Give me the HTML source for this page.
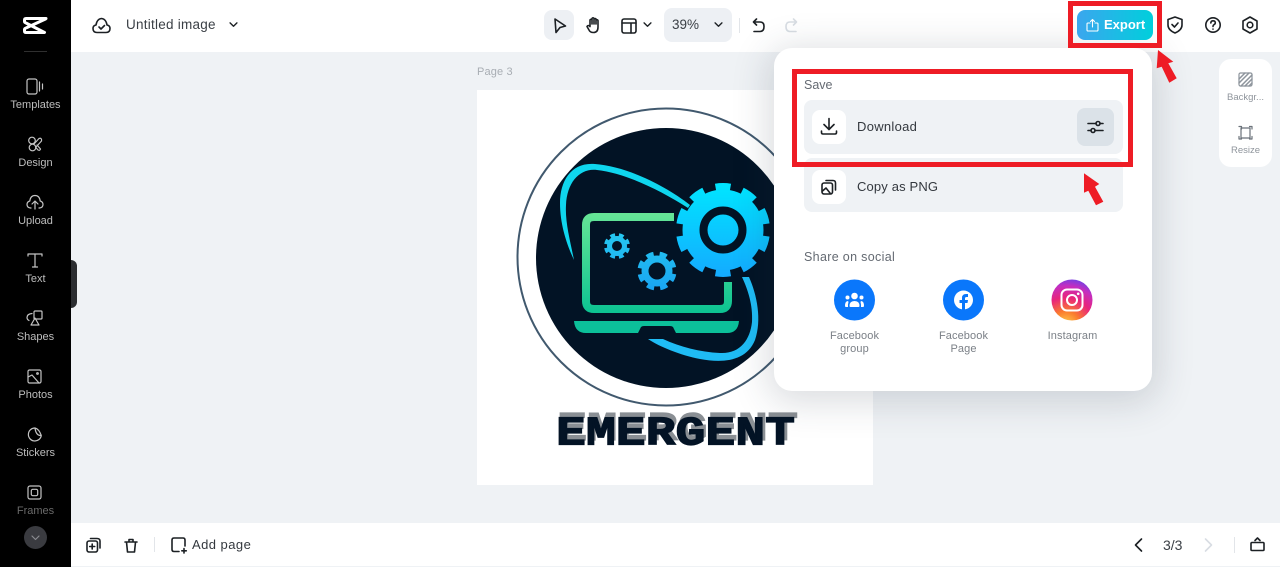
<!DOCTYPE html>
<html lang="en"><head><meta charset="utf-8"><title>Untitled image</title>
<style>
*{box-sizing:border-box}
html,body{margin:0;padding:0}
html{background:#eff2f5}
body{width:1280px;height:567px;position:relative;overflow:hidden;background:#eff2f5;font-family:"Liberation Sans",sans-serif;color:#2b3036;filter:blur(.3px)}
.t{position:absolute;white-space:nowrap;line-height:14px}
.a{position:absolute}
.nav{left:0;width:71px;text-align:center;color:#bdbdbd;font-size:11px}
.s{position:absolute;overflow:visible;fill:none;stroke:#1c2024;stroke-width:1.6;stroke-linecap:round;stroke-linejoin:round}
.n{stroke:#c4c4c4;stroke-width:1.2}
.lab{font-size:11px;color:#7b8087;text-align:center;line-height:13px;letter-spacing:.1px}
</style></head><body>

<!-- top and bottom bars -->
<div class="a" style="left:71px;top:0;width:1209px;height:52px;background:#fff"></div>
<div class="a" style="left:71px;top:523px;width:1209px;height:43px;background:#fff"></div>

<!-- page -->
<div class="t" style="left:477px;top:65px;font-size:11px;letter-spacing:.15px;color:#a8adb3">Page 3</div>
<svg class="a" style="left:477px;top:90px" width="396" height="395" viewBox="477 90 396 395">
<defs>
<linearGradient id="g1" gradientUnits="userSpaceOnUse" x1="0" y1="183" x2="0" y2="277"><stop offset="0" stop-color="#00e6ff"/><stop offset="1" stop-color="#14aaff"/></linearGradient>
<linearGradient id="g2" gradientUnits="userSpaceOnUse" x1="0" y1="213" x2="0" y2="313"><stop offset="0" stop-color="#66e596"/><stop offset="1" stop-color="#0cc392"/></linearGradient>
<linearGradient id="g3" gradientUnits="userSpaceOnUse" x1="0" y1="232" x2="0" y2="290"><stop offset="0" stop-color="#26c8f0"/><stop offset="1" stop-color="#19a5f2"/></linearGradient>
</defs>
<rect x="477" y="90" width="396" height="395" fill="#fff"/>
<circle cx="666" cy="257" r="148.5" fill="none" stroke="#41596e" stroke-width="2"/>
<circle cx="666" cy="258" r="130" fill="#021325"/>
<path d="M690 205C665 185 625 166 595 164C572 162 560 180 560 203C560 225 567 245 574 260C570 240 565 222 566 205C567 182 580 168 597 170C625 173 660 190 688 208Z" fill="#0fd6ee"/>
<path d="M742 277L749 277C757 295 762 320 755 340C746 362 722 363 700 359C680 355 660 347 648 339L663 339C680 347 700 352 720 353C740 354 750 340 752 322C753 305 748 290 742 277Z" fill="#1fbcf5"/>
<path d="M674 217H594Q586 217 586 225V301Q586 309 594 309H720Q728 309 728 301V282" fill="none" stroke="url(#g2)" stroke-width="8"/>
<path d="M574 321H739Q738 333 727 333H676L673 327Q672 326 670 326H644Q642 326 641 327L638 333H586Q575 333 574 321Z" fill="#0cc09a"/>
<g fill="none" stroke="url(#g3)">
<circle cx="617" cy="246" r="7.500" stroke-width="5"/>
<circle cx="617" cy="246" r="11" stroke-width="4" pathLength="16" stroke-dasharray="1.100 .9" stroke-dashoffset="-.45"/>
<circle cx="657" cy="271" r="12" stroke-width="7"/>
<circle cx="657" cy="271" r="17" stroke-width="5" pathLength="16" stroke-dasharray="1.100 .9" stroke-dashoffset="-.45"/>
</g>
<circle cx="723" cy="230" r="32" fill="none" stroke="url(#g1)" stroke-width="17"/>
<circle cx="723" cy="230" r="41.5" fill="none" stroke="url(#g1)" stroke-width="11" pathLength="20" stroke-dasharray="1.100 .9" stroke-dashoffset="-.45"/>
<circle cx="723" cy="230" r="15.5" fill="url(#g1)"/>
<text x="557" y="440" font-family="'Liberation Mono',monospace" font-weight="700" font-size="41" textLength="241" lengthAdjust="spacingAndGlyphs" fill="#8a8f94" stroke="#8a8f94" stroke-width="1.200">EMERGENT</text>
<text x="556" y="444.500" font-family="'Liberation Mono',monospace" font-weight="700" font-size="41" textLength="239" lengthAdjust="spacingAndGlyphs" fill="#031325" stroke="#031325" stroke-width="1.200">EMERGENT</text>
</svg>

<!-- sidebar -->
<div class="a" style="left:0;top:0;width:71px;height:567px;background:#000"></div>
<div class="a" style="left:71px;top:260px;width:6px;height:48px;background:#2b2d30;border-radius:0 6px 6px 0"></div>
<svg class="s" style="left:23px;top:15px" width="25" height="20" viewBox="0 0 25 20"><path d="M23 3.500H3Q1.500 3.500 1.500 5V6.500Q1.500 7.500 3 8L21.500 17.500H3Q1.500 17.500 1.500 16V14.500Q1.500 13.500 3 13L22.500 4" stroke="#fff" stroke-width="3"/></svg>
<div class="a" style="left:24px;top:51px;width:23px;height:1px;background:#2f2f2f"></div>

<svg class="s n" style="left:26px;top:78px" width="18" height="17" viewBox="0 0 18 17"><rect x="1" y="1" width="10" height="15" rx="2"/><path d="M13.500 4V13M16.500 6V11"/></svg>
<div class="t nav" style="top:98px">Templates</div>
<svg class="s n" style="left:27px;top:136px" width="16" height="16" viewBox="0 0 16 16"><circle cx="5" cy="4.500" r="3.300"/><circle cx="5.500" cy="11.500" r="3.300"/><path d="M7 8L12 2.500Q15 1.500 14.500 5L9 11M10 9L13.500 13Q13 15 11 14L8.500 11"/></svg>
<div class="t nav" style="top:156px">Design</div>
<svg class="s n" style="left:26px;top:194px" width="18" height="16" viewBox="0 0 18 16"><path d="M5 14H4.500Q1 13.500 1 10.500Q1 7.800 3.800 7Q4.500 1.500 9 1.500Q13.500 1.500 14.200 7Q17 7.800 17 10.500Q17 13.500 13.500 14H13M6 10L9 7L12 10M9 7.500V15"/></svg>
<div class="t nav" style="top:214px">Upload</div>
<svg class="s n" style="left:27px;top:253px" width="16" height="15" viewBox="0 0 16 15"><path d="M1 3V1H15V3M8 1V14M5.500 14H10.500"/></svg>
<div class="t nav" style="top:272px">Text</div>
<svg class="s n" style="left:26px;top:310px" width="18" height="16" viewBox="0 0 18 16"><rect x="8" y="1" width="8" height="8" rx="1"/><path d="M6 3.500Q1 4 1 7.500Q1 9.500 3 10.500M9 8L13 15H5Z"/></svg>
<div class="t nav" style="top:330px">Shapes</div>
<svg class="s n" style="left:27px;top:369px" width="15" height="15" viewBox="0 0 15 15"><rect x="1" y="1" width="13" height="13" rx="1.500"/><path d="M1 8L5 6L12 14"/><circle cx="10.500" cy="4.500" r=".8"/></svg>
<div class="t nav" style="top:388px">Photos</div>
<svg class="s n" style="left:27px;top:427px" width="15" height="15" viewBox="0 0 15 15"><path d="M8 1A6.500 6.500 0 1 0 14.300 8.500Q9 9 8 1ZM8 1Q12 2 14.300 8.500"/></svg>
<div class="t nav" style="top:446px">Stickers</div>
<svg class="s n" style="left:27px;top:485px" width="15" height="15" viewBox="0 0 15 15"><rect x="1" y="1" width="13" height="13" rx="2"/><rect x="4.300" y="4.300" width="6.400" height="6.400" rx="1.500"/></svg>
<div class="t nav" style="top:504px;color:#6a6a6a">Frames</div>
<div class="a" style="left:24px;top:526px;width:23px;height:23px;border-radius:50%;background:#3a3b40"></div>
<svg class="s" style="left:31px;top:535px;stroke:#8a8b90;stroke-width:1.200" width="9" height="6" viewBox="0 0 9 6"><path d="M1 1L4.500 4.500L8 1"/></svg>

<!-- top left -->
<svg class="s" style="left:92px;top:17px" width="19" height="17" viewBox="0 0 19 17"><path d="M5 15.500Q1 15.500 1 11.500Q1 8.500 4 8Q5 2 9.500 1.500Q14 2 15 8Q18 8.500 18 11.500Q18 15.500 14 15.500ZM7 10L9 12L12.500 8.500"/></svg>
<div class="t" style="left:126px;top:18px;font-size:13.500px;letter-spacing:.25px;color:#3a3f45">Untitled image</div>
<svg class="s" style="left:229px;top:22px" width="9" height="6" viewBox="0 0 10 7"><path d="M1 1L5 5L9 1"/></svg>

<!-- toolbar -->
<div class="a" style="left:544px;top:10px;width:30px;height:30px;border-radius:8px;background:#edf0f4"></div>
<svg class="s" style="left:553px;top:17px" width="14" height="17" viewBox="0 0 14 17"><path d="M2 2L12.500 9L7 10.500L3 15.500Z"/></svg>
<svg class="s" style="left:586px;top:16px" width="16" height="18" viewBox="0 0 16 18"><path d="M4 10V4Q5 2.500 6 4V2.500Q7 1 8 2.500V3Q9 2 10 3V4Q11.500 3.300 12 4.500V11Q12 16.500 7.500 16.500Q4 16.500 3 14L1 10.500Q2 8.500 4 10.500M6 4V8M8 3V8M10 4V8"/></svg>
<svg class="s" style="left:621px;top:18px" width="16" height="16" viewBox="0 0 16 16"><rect x="1" y="1" width="14" height="14" rx="2"/><path d="M1 5H15M10 5V15"/></svg>
<svg class="s" style="left:643px;top:22px" width="9" height="6" viewBox="0 0 10 7"><path d="M1 1L5 5L9 1"/></svg>
<div class="a" style="left:664px;top:8px;width:68px;height:34px;border-radius:8px;background:#edf0f4"></div>
<div class="t" style="left:672px;top:18px;font-size:13.500px;color:#3a3f45">39%</div>
<svg class="s" style="left:714px;top:22px" width="9" height="6" viewBox="0 0 10 7"><path d="M1 1L5 5L9 1"/></svg>
<div class="a" style="left:739px;top:18px;width:1px;height:15px;background:#e2e5e9"></div>
<svg class="s" style="left:752px;top:18px" width="13" height="15" viewBox="0 0 13 15"><path d="M4.500 1L1.500 4L4.500 7M2 4H8Q12 4 12 8.500Q12 13.500 8 13.500H2"/></svg>
<svg class="s" style="left:785px;top:18px;stroke:#d8dde3" width="13" height="15" viewBox="0 0 13 15"><path d="M8.500 1L11.500 4L8.500 7M11 4H5Q1 4 1 8.500Q1 13.500 5 13.500H11"/></svg>

<!-- panel -->
<div class="a" style="left:774px;top:48px;width:378px;height:343px;border-radius:18px;background:#fff;box-shadow:0 6px 36px 6px rgba(40,55,70,.17)"></div>
<div class="t" style="left:804px;top:78px;font-size:12.500px;color:#646a72">Save</div>
<div class="a" style="left:804px;top:100px;width:319px;height:54px;border-radius:8px;background:#eff2f5"></div>
<div class="a" style="left:804px;top:158px;width:319px;height:54px;border-radius:8px;background:#eff2f5"></div>
<div class="a" style="left:812px;top:110px;width:34px;height:34px;border-radius:8px;background:#fff"></div>
<div class="a" style="left:812px;top:170px;width:34px;height:34px;border-radius:8px;background:#fff"></div>
<svg class="s" style="left:820px;top:117px" width="18" height="19" viewBox="0 0 18 19"><path d="M9 1.500V12M4 7.500L9 12.500L14 7.500M1.500 14V15.500Q1.500 17 3 17H15Q16.500 17 16.500 15.500V14"/></svg>
<div class="t" style="left:857px;top:120px;font-size:13px;letter-spacing:.3px;color:#33383e">Download</div>
<div class="a" style="left:1077px;top:108px;width:37px;height:38px;border-radius:8px;background:#dbe2e8"></div>
<svg class="s" style="left:1087px;top:119px" width="17" height="16" viewBox="0 0 17 16"><path d="M1 4.500H9M13 4.500H16M1 11.500H4M8 11.500H16"/><circle cx="11" cy="4.500" r="2"/><circle cx="6" cy="11.500" r="2"/></svg>
<svg class="s" style="left:821px;top:179px" width="16" height="16" viewBox="0 0 16 16"><rect x="1" y="4" width="10.500" height="11" rx="2"/><path d="M5 1.500H12Q14.500 1.500 14.500 4V11M1.500 12L5 9L9 14"/></svg>
<div class="t" style="left:857px;top:180px;font-size:13px;letter-spacing:.15px;color:#33383e">Copy as PNG</div>
<div class="t" style="left:804px;top:250px;font-size:12.500px;letter-spacing:.33px;color:#646a72">Share on social</div>

<svg class="a" style="left:834px;top:279px" width="260" height="42" viewBox="834 279 260 42">
<defs>
<radialGradient id="ig" gradientUnits="userSpaceOnUse" cx="1066" cy="325" r="46"><stop offset="0" stop-color="#fdd44d"/><stop offset=".3" stop-color="#fb7c2e"/><stop offset=".6" stop-color="#e8247c"/><stop offset=".85" stop-color="#c42ec0"/><stop offset="1" stop-color="#7a3fe0"/></radialGradient>
</defs>
<circle cx="854.500" cy="300" r="20.500" fill="#0a77fb"/>
<g fill="#fff"><circle cx="854.500" cy="296" r="3.300"/><path d="M849.500 306Q849.500 301 854.500 301Q859.500 301 859.500 306Q859.500 307 858.500 307H850.500Q849.500 307 849.500 306Z"/><circle cx="847.500" cy="297.500" r="2"/><circle cx="861.500" cy="297.500" r="2"/><path d="M845 306Q845 301 848 301L848.500 302Q847.800 304 848 307H846Q845 307 845 306ZM864 306Q864 301 861 301L860.500 302Q861.200 304 861 307H863Q864 307 864 306Z"/></g>
<circle cx="963.500" cy="300" r="20.500" fill="#0a77fb"/>
<circle cx="963.500" cy="300" r="9.500" fill="#fff"/>
<path d="M962 310V303H959.500V300H962V298Q962 294 966 294H968V297H966.500Q965 297 965 298.500V300H968L967.500 303H965V310Z" fill="#0a77fb"/>
<circle cx="1072" cy="300" r="20.500" fill="url(#ig)"/>
<rect x="1061.500" y="289.500" width="21" height="21" rx="5.500" fill="none" stroke="#fff" stroke-width="2"/>
<circle cx="1072" cy="300" r="5" fill="none" stroke="#fff" stroke-width="2"/>
<circle cx="1078.200" cy="293.800" r="1.300" fill="#fff"/>
</svg>
<div class="t lab" style="left:814px;top:329px;width:81px;padding-top:1px">Facebook<br>group</div>
<div class="t lab" style="left:923px;top:329px;width:81px;padding-top:1px">Facebook<br>Page</div>
<div class="t lab" style="left:1032px;top:329px;width:81px;padding-top:1px">Instagram</div>

<!-- top right -->
<div class="a" style="left:1077px;top:10px;width:76px;height:30px;border-radius:8px;background:linear-gradient(90deg,#3ba6ee,#00cfdc)"></div>
<svg class="s" style="left:1086px;top:18px;stroke:#fff;stroke-width:1.100" width="13" height="14" viewBox="0 0 13 14"><path d="M4 5H2Q1 5 1 6V12Q1 13 2 13H11Q12 13 12 12V6Q12 5 11 5H9M6.500 9V1.500M4.500 3.500L6.500 1.500L8.500 3.500"/></svg>
<div class="t" style="left:1104px;top:18px;font-size:13px;font-weight:700;color:#fff">Export</div>
<svg class="s" style="left:1167px;top:16px" width="16" height="18" viewBox="0 0 16 18"><path d="M8 1L15 3.500V9Q15 14 8 17Q1 14 1 9V3.500ZM5 8.500L7.500 11L11 7"/></svg>
<svg class="s" style="left:1205px;top:17px" width="16" height="16" viewBox="0 0 16 16"><circle cx="8" cy="8" r="7.200"/><path d="M5.800 6Q6 3.800 8 3.800Q10.300 3.800 10.300 5.800Q10.300 7.200 8.800 7.800Q8 8.200 8 9.500M8 12V12.100"/></svg>
<svg class="s" style="left:1242px;top:16px" width="16" height="18" viewBox="0 0 16 18"><path d="M8 1L15 5V13L8 17L1 13V5Z"/><circle cx="8" cy="9" r="2.800"/></svg>

<!-- right float -->
<div class="a" style="left:1219px;top:59px;width:53px;height:108px;border-radius:12px;background:#fff"></div>
<svg class="s" style="left:1238px;top:72px;stroke:#8d949c;stroke-width:1.200" width="15" height="15" viewBox="0 0 15 15"><rect x="1" y="1" width="13" height="13" rx="1.500"/><path d="M1 7L7 1M1 11L11 1M3 14L14 3M7 14L14 7M11 14L14 11" stroke-width="1.500"/></svg>
<div class="t" style="left:1219px;top:91px;width:53px;text-align:center;font-size:9.500px;color:#8f959c">Backgr...</div>
<svg class="s" style="left:1238px;top:125px;stroke:#6b727a;stroke-width:1.200" width="15" height="15" viewBox="0 0 15 15"><path d="M3 3H12V13H3ZM1 1.500H3.500V4M11.500 1.500H14V4M14 11.500V14H11.500M1 11.500V14H3.500"/></svg>
<div class="t" style="left:1219px;top:144px;width:53px;text-align:center;font-size:9.500px;color:#8f959c">Resize</div>

<!-- bottom bar -->
<svg class="s" style="left:86px;top:537px" width="15" height="16" viewBox="0 0 15 16"><rect x="1" y="4" width="10.500" height="11" rx="2"/><path d="M4.500 1.500H11Q14 1.500 14 4V11M6.200 7V12M3.700 9.500H8.700"/></svg>
<svg class="s" style="left:124px;top:538px" width="14" height="15" viewBox="0 0 14 15"><path d="M1 4H13M5 4V1.500H9V4M2.500 4L3.500 14H10.500L11.500 4"/></svg>
<div class="a" style="left:154px;top:537px;width:1px;height:15px;background:#e2e5e9"></div>
<svg class="s" style="left:171px;top:537px" width="17" height="17" viewBox="0 0 17 17"><path d="M8 14.500H3Q1 14.500 1 12.500V3Q1 1 3 1H12Q14 1 14 3V9M13 11.500V16M10.800 13.800H15.300"/></svg>
<div class="t" style="left:192px;top:538px;font-size:13px;letter-spacing:.45px;color:#33383e">Add page</div>
<svg class="s" style="left:1134px;top:538px" width="9" height="14" viewBox="0 0 9 14"><path d="M7.500 1L1.500 7L7.500 13"/></svg>
<div class="t" style="left:1163px;top:538px;font-size:14px;color:#3a3f45">3/3</div>
<svg class="s" style="left:1204px;top:538px;stroke:#d8dde3" width="9" height="14" viewBox="0 0 9 14"><path d="M1.500 1L7.500 7L1.500 13"/></svg>
<div class="a" style="left:1234px;top:537px;width:1px;height:16px;background:#e2e5e9"></div>
<svg class="s" style="left:1250px;top:537px" width="15" height="15" viewBox="0 0 15 15"><rect x="1" y="5.500" width="13" height="8" rx="1"/><path d="M5 3.500L7.500 1L10 3.500"/></svg>

<!-- red annotations -->
<div class="a" style="left:1068px;top:1px;width:94px;height:47px;border:5px solid #ee1c25"></div>
<div class="a" style="left:792px;top:69px;width:341px;height:98px;border:5.500px solid #ee1c25"></div>
<svg class="a" style="left:0;top:0" width="1280" height="567" viewBox="0 0 1280 567"><path d="M1158 50L1173.300 61.700L1168.300 63.300L1176.700 78.300L1169.300 82.700L1161.700 66.700L1156.700 68.300Z" fill="#ee1c25"/><path d="M1084 173.300L1099.300 184L1095 186.700L1103.300 201.700L1096 205.300L1088.300 190.700L1084 192.700Z" fill="#ee1c25"/></svg>
</body></html>
